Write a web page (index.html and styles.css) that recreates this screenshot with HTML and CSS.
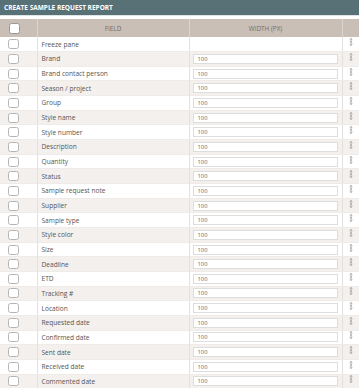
FILE: index.html
```html
<!DOCTYPE html>
<html lang="en">
<head>
  <meta charset="UTF-8" />
  <title>Create sample request report</title>
  <link rel="stylesheet" href="styles.css">
</head>
<body>

  <div class="title-bar">CREATE SAMPLE REQUEST REPORT</div>

  <table class="report-table">
    <colgroup>
      <col class="col-check">
      <col class="col-field">
      <col class="col-width">
      <col class="col-handle">
    </colgroup>
    <thead>
      <tr>
        <th><span class="check check-head"></span></th>
        <th>FIELD</th>
        <th>WIDTH (PX)</th>
        <th></th>
      </tr>
    </thead>
    <tbody id="rows"></tbody>
  </table>

  <script>
    const fields = [
      "Freeze pane", "Brand", "Brand contact person", "Season / project", "Group",
      "Style name", "Style number", "Description", "Quantity", "Status",
      "Sample request note", "Supplier", "Sample type", "Style color", "Size",
      "Deadline", "ETD", "Tracking #", "Location", "Requested date",
      "Confirmed date", "Sent date", "Received date", "Commented date"
    ];

    // small up/down arrow used as the drag handle
    const handle = '<svg width="4" height="8" viewBox="0 0 4 8"><path d="M2 0.5 L2 7.5 M0.6 1.8 L2 0.5 L3.4 1.8 M0.6 6.2 L2 7.5 L3.4 6.2 M1 4 L3 4" fill="none" stroke="#999" stroke-width="0.8"/></svg>';

    const tbody = document.getElementById("rows");
    fields.forEach((name, i) => {
      const tr = document.createElement("tr");
      const input = i === 0 ? "" : '<input type="text" class="width-input" value="100">';
      tr.innerHTML =
        '<td><span class="check"></span></td>' +
        '<td class="field-name">' + name + '</td>' +
        '<td class="width-cell">' + input + '</td>' +
        '<td class="handle">' + handle + '</td>';
      tbody.appendChild(tr);
    });
  </script>

</body>
</html>
```

FILE: styles.css
```css
body {
  margin: 0;
  font-family: "Open Sans", Arial, sans-serif;
  background: #fff;
  color: #555;
}

.title-bar {
  height: 15px;
  line-height: 15px;
  padding-left: 4px;
  background: #587177;
  color: #fff;
  font-size: 6.5px;
  font-weight: bold;
  border-bottom: 1px solid #dfe5e6;
}

.report-table {
  width: 359px;
  margin-top: 3px;
  border-collapse: collapse;
  table-layout: fixed;
  font-size: 6.6px;
}

.col-check { width: 37px; }
.col-field { width: 152px; }
.col-width { width: 153px; }
.col-handle { width: 17px; }

.report-table th {
  height: 18px;
  padding: 0;
  background: #c9bfb6;
  color: #756c66;
  font-weight: normal;
  font-size: 6.4px;
  text-align: center;
  border-right: 1px solid #ddd6d0;
}

.report-table td {
  height: 14.66px;
  padding: 0;
  border-right: 1px solid #e4e0dc;
  border-bottom: 1px solid #efebe8;
  box-sizing: border-box;
}

.report-table th:last-child,
.report-table td:last-child {
  border-right: none;
}

.report-table tbody tr:nth-child(even) td {
  background: #f3f0ed;
}

.check {
  display: block;
  width: 9px;
  height: 8px;
  margin-left: 8px;
  border: 1px solid #b5b5b5;
  border-radius: 2.5px;
  background: #fff;
}

.check-head {
  width: 9px;
  height: 9px;
  margin-left: 9px;
  border-color: #999;
}

.field-name {
  padding-left: 4px !important;
  white-space: nowrap;
}

.width-cell {
  padding: 0 4px 0 3px !important;
}

.width-input {
  display: block;
  width: 100%;
  height: 10px;
  box-sizing: border-box;
  margin: 0;
  padding: 0 0 0 4px;
  border: 1px solid #ddd;
  background: #fff;
  font-family: "Open Sans", Arial, sans-serif;
  font-size: 5.8px;
  color: #666;
  outline: none;
}

.handle {
  text-align: center;
  line-height: 0;
}

.handle svg {
  display: inline-block;
  margin-top: -4px;
}
```
